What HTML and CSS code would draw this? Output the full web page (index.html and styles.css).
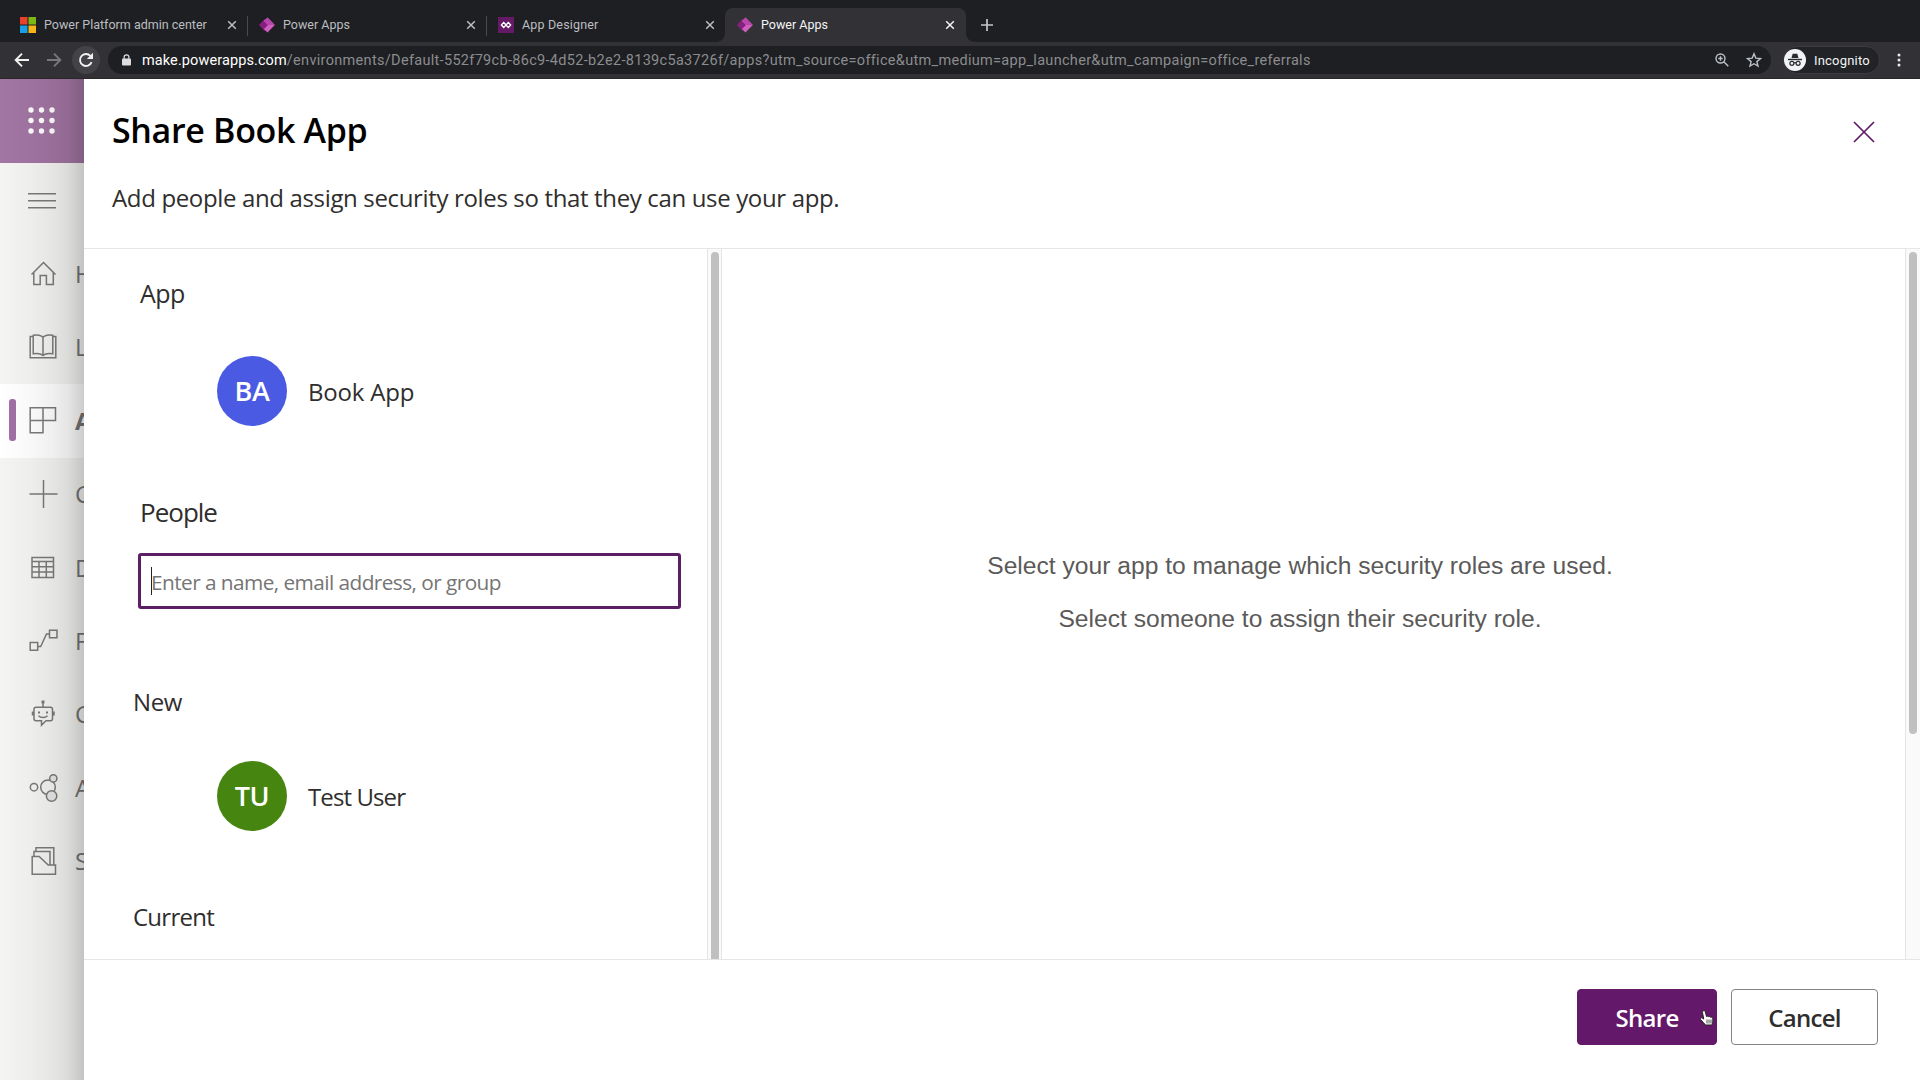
FILE: index.html
```html
<!DOCTYPE html>
<html lang="en">
<head>
<meta charset="utf-8">
<title>Power Apps</title>
<link rel="stylesheet" href="styles.css">
</head>
<body>
<svg class="defs" width="0" height="0">
  <defs>
    <symbol id="close" viewBox="0 0 10 10"><path d="M1.2 1.2l7.6 7.6M8.8 1.2L1.2 8.8" fill="none" stroke="currentColor" stroke-width="1.5"/></symbol>
    <symbol id="powerapps" viewBox="0 0 16 16"><path d="M5.500 2L0 8l5.500 6 5-6z" fill="#86207f"/><path d="M8.500 .6L5 4l4 4-4 4 3.500 3.400L15.800 8z" fill="#cf5fc0"/><path d="M8.500 .6L5 4l4 4h6.800z" fill="#b845ab"/></symbol>
  </defs>
</svg>
<div class="browser">
  <div class="tabs">
    <div class="tab">
      <svg class="fav" viewBox="0 0 16 16"><path fill="#e8412c" d="M0 0h7.500v7.500H0z"/><path fill="#7cb813" d="M8.500 0H16v7.500H8.500z"/><path fill="#1a9fe4" d="M0 8.500h7.500V16H0z"/><path fill="#f8b517" d="M8.500 8.500H16V16H8.500z"/></svg>
      <span class="tab-title">Power Platform admin center</span>
      <svg class="tab-close"><use href="#close"/></svg>
    </div>
    <div class="tab">
      <svg class="fav"><use href="#powerapps"/></svg>
      <span class="tab-title">Power Apps</span>
      <svg class="tab-close"><use href="#close"/></svg>
    </div>
    <div class="tab designer">
      <svg class="fav" viewBox="0 0 16 16"><path fill="#651a66" d="M0 0h16v16H0z"/><g fill="none" stroke="#fff" stroke-width="1.400"><path d="M5.700 5.500L8 8l-2.300 2.500L3.400 8zM10.300 5.500L12.600 8l-2.300 2.500L8 8z"/></g></svg>
      <span class="tab-title">App Designer</span>
      <svg class="tab-close"><use href="#close"/></svg>
    </div>
    <div class="tab active">
      <svg class="fav"><use href="#powerapps"/></svg>
      <span class="tab-title">Power Apps</span>
      <svg class="tab-close"><use href="#close"/></svg>
    </div>
    <svg class="new-tab" viewBox="0 0 12 12"><path d="M6 0v12M0 6h12" stroke="#c4c7ca" stroke-width="1.700"/></svg>
  </div>
  <div class="toolbar">
    <svg class="nav-btn" viewBox="0 0 16 16"><path d="M15 8H2M8 1.700L1.700 8 8 14.300" fill="none" stroke="#f1f1f1" stroke-width="1.900"/></svg>
    <svg class="nav-btn" viewBox="0 0 16 16"><path d="M1 8h13M8 1.700L14.300 8 8 14.300" fill="none" stroke="#77787b" stroke-width="1.900"/></svg>
    <span class="reload"><svg viewBox="0 0 16 16"><path d="M13.600 10.200A6 6 0 1 1 12.400 3.900L14 5.600" fill="none" stroke="#f1f1f1" stroke-width="1.900"/><path d="M15 .8v6.200H8.800z" fill="#f1f1f1"/></svg></span>
    <div class="omnibox">
      <svg class="lock" viewBox="0 0 9 12"><path d="M2.100 5V3.300a2.400 2.400 0 0 1 4.800 0V5" fill="none" stroke="#dcdddf" stroke-width="1.200"/><rect y="4.500" width="9" height="7" rx="1" fill="#dcdddf"/></svg>
      <div class="url"><span class="host">make.powerapps.com</span><span class="path">/environments/Default-552f79cb-86c9-4d52-b2e2-8139c5a3726f/apps?utm_source=office&amp;utm_medium=app_launcher&amp;utm_campaign=office_referrals</span></div>
      <svg class="mag" viewBox="0 0 14 14"><g fill="none" stroke="#bdc1c6" stroke-width="1.400"><circle cx="5.500" cy="5.500" r="4.500"/><path d="M8.800 8.800l4.500 4.500M5.500 3.300v4.400M3.300 5.500h4.400"/></g></svg>
      <svg class="star" viewBox="0 0 16 16"><path d="M8 1.800l1.800 4.300 4.700.4-3.600 3.100 1.100 4.500L8 11.700l-4 2.400 1.100-4.500L1.500 6.500l4.700-.4z" fill="none" stroke="#bdc1c6" stroke-width="1.400"/></svg>
    </div>
    <div class="incognito">
      <svg viewBox="0 0 22 22"><circle cx="11" cy="11" r="11" fill="#f1f3f4"/><path d="M7.500 9L8.700 4.800h4.600L14.500 9z" fill="#2a2b2e"/><path d="M4 10.500h14" stroke="#2a2b2e" stroke-width="1.400"/><g fill="none" stroke="#2a2b2e" stroke-width="1.200"><circle cx="7.900" cy="14.300" r="2"/><circle cx="14.100" cy="14.300" r="2"/><path d="M9.900 14c.7-.5 1.500-.5 2.200 0"/></g></svg>
      <span>Incognito</span>
    </div>
    <svg class="kebab" viewBox="0 0 4 14"><g fill="#e8eaed"><circle cx="2" cy="2" r="1.500"/><circle cx="2" cy="7" r="1.500"/><circle cx="2" cy="12" r="1.500"/></g></svg>
  </div>
</div>
<div class="page">
  <aside class="sidebar">
    <div class="waffle"><svg viewBox="0 0 27 27"><g fill="#fff"><circle cx="3" cy="3" r="2.700"/><circle cx="13.500" cy="3" r="2.700"/><circle cx="24" cy="3" r="2.700"/><circle cx="3" cy="13.500" r="2.700"/><circle cx="13.500" cy="13.500" r="2.700"/><circle cx="24" cy="13.500" r="2.700"/><circle cx="3" cy="24" r="2.700"/><circle cx="13.500" cy="24" r="2.700"/><circle cx="24" cy="24" r="2.700"/></g></svg></div>
    <nav>
      <div class="item"><svg viewBox="0 0 28 28"><path d="M-1 6.800h28M-1 13.800h28M-1 20.800h28"/></svg></div>
      <div class="item"><svg viewBox="0 0 28 28"><path d="M2.500 14.500L14.500 2.500l12 12M4.800 12.500V24.500h6.400v-9h6.200v9h6.900V12.500"/></svg><span>H</span></div>
      <div class="item"><svg viewBox="0 0 28 28"><path d="M4 3.500H1.200v21.300h25.600V3.500H24M14 4.200C12.500 2.200 8 1.400 4.200 2.300v18.500c4-.8 8 0 9.800 1.700 1.800-1.700 5.800-2.500 9.800-1.700V2.300C20 1.400 15.500 2.200 14 4.200zv18"/></svg><span>L</span></div>
      <div class="item selected"><svg viewBox="0 0 28 28"><path d="M1.200 .8h25.300v12.600H1.200zM14 .8v24.900H1.200V.8"/></svg><span>A</span></div>
      <div class="item"><svg viewBox="0 0 28 28"><path d="M14.500 0v28M.5 14h28"/></svg><span>C</span></div>
      <div class="item"><svg viewBox="0 0 28 28"><path d="M3 3.500h21.500v20H3zM3 7.500h21.500M3 12.700h21.500M3 18.100h21.500M10 7.500v16M17.300 7.500v16"/></svg><span>D</span></div>
      <div class="item"><svg viewBox="0 0 28 28"><path d="M1.200 15.500h7.500v7.700H1.200zM20.500 3.200H28v7.500h-7.500zM8.700 19.500h3L17.500 7h3"/></svg><span>F</span></div>
      <div class="item"><svg viewBox="0 0 28 28"><path d="M7 7.200h14.500a2 2 0 0 1 2 2v9.500a2 2 0 0 1-2 2H17l-4.500 4.500v-4.500H7a2 2 0 0 1-2-2V9.200a2 2 0 0 1 2-2zM14 7V2M3.500 11.500v4M25 11.500v4M9.500 15.700c2.500 2.500 6.500 2.500 9 0"/><path class="solid" d="M12.500 .5h3v3h-3zM9 11.500h2v2H9zM17 11.500h2v2h-2z"/></svg><span>C</span></div>
      <div class="item"><svg viewBox="0 0 28 28"><circle cx="5" cy="13.200" r="3.700"/><circle cx="19" cy="13.200" r="7.300"/><circle class="fill" cx="24.300" cy="4.400" r="3.600"/><circle class="fill" cx="22.600" cy="22" r="5.200"/></svg><span>A</span></div>
      <div class="item"><svg viewBox="0 0 28 28"><path d="M3.200 9.500h7l9 8.500h7.300v9.200H3.200zM5 9.500V4.500h16V18M7 4.500V.8h17.800V18"/></svg><span>S</span></div>
    </nav>
    <div class="shade"></div>
  </aside>
  <main class="panel">
    <header>
      <div class="titles">
        <h1>Share Book App</h1>
        <p>Add people and assign security roles so that they can use your app.</p>
      </div>
      <svg class="dismiss" viewBox="0 0 22 22"><path d="M1 1l20 20M21 1L1 21" stroke="#5f1c66" stroke-width="1.700"/></svg>
    </header>
    <div class="body">
      <section class="left">
        <h2 class="h-app">App</h2>
        <div class="persona"><span class="avatar blue">BA</span><span class="name">Book App</span></div>
        <h2 class="h-people">People</h2>
        <div class="input"><i class="caret"></i><span class="placeholder">Enter a name, email address, or group</span></div>
        <h3 class="h-new">New</h3>
        <div class="persona"><span class="avatar green">TU</span><span class="name user">Test User</span></div>
        <h3 class="h-current">Current</h3>
      </section>
      <div class="scroll inner"><i></i></div>
      <section class="right">
        <p>Select your app to manage which security roles are used.</p>
        <p>Select someone to assign their security role.</p>
      </section>
      <div class="scroll outer"><i></i></div>
    </div>
    <footer>
      <div class="btn primary"><span>Share</span>
        <svg class="cursor" viewBox="0 0 16 18"><path d="M4.200 1c1-.6 1.900 0 2.200 1l1.100 4.500c.8-.6 1.700-.4 2 .3.800-.5 1.700-.2 2 .5.900-.4 2 0 2.200 1 .3 2.200.2 4.500-.8 6.700H6.500C5.200 13 3 11.500 1.500 9.300c-.6-1.200.6-2 1.700-1.300l1.500 1.100L3.500 2.500C3.300 1.800 3.600 1.300 4.200 1z" fill="#fff" stroke="#222" stroke-width="1"/><path d="M8 9.500v4M10 9.500v4M12 9.500v4" stroke="#222" stroke-width=".8"/></svg>
      </div>
      <div class="btn"><span>Cancel</span></div>
    </footer>
  </main>
</div>
</body>
</html>
```
FILE: styles.css
```css
* { box-sizing: border-box; }
body { margin: 0; width: 1920px; height: 1080px; overflow: hidden; background: #fff; font-family: "Open Sans", "Noto Sans", sans-serif; color: #2f2e2d; white-space: nowrap; }
h1, h2, h3, p { margin: 0; font-weight: 400; }
svg { display: block; flex: none; }
.defs { display: none; }

/* Browser chrome */
.browser { height: 79px; font-family: Roboto, sans-serif; }
.tabs { height: 42px; background: #1e1f22; display: flex; padding: 8px 0 0 8px; }
.tab { width: 239px; height: 34px; padding: 0 10px 0 12px; display: flex; align-items: center; color: #bcbec1; font-size: 12.5px; position: relative; }
.tab:nth-child(-n+2)::after { content: ""; position: absolute; right: -1px; top: 8px; width: 1px; height: 20px; background: #4a4b4f; }
.tab.active { width: 241px; padding-right: 11px; background: #323236; border-radius: 8px 8px 0 0; color: #f4f5f6; }
.tab.active::before, .tab.active::after { content: ""; position: absolute; bottom: 0; width: 8px; height: 8px; }
.tab.active::before { left: -8px; background: radial-gradient(circle at 0 0, #1e1f22 7.5px, #323236 8px); }
.tab.active::after { right: -8px; background: radial-gradient(circle at 100% 0, #1e1f22 7.5px, #323236 8px); }
.fav { width: 16px; height: 16px; margin-right: 8px; }
.tab-title { flex: 1; padding-bottom: 1px; }
.designer .tab-title { letter-spacing: .17px; }
.tab-close { width: 10px; height: 10px; }
.new-tab { width: 12px; height: 12px; margin: 11px 0 0 15px; }
.toolbar { height: 37px; background: #323236; border-bottom: 1px solid #28282b; display: flex; align-items: center; padding: 0 19px 0 14px; }
.nav-btn { width: 16px; height: 16px; margin-right: 16px; }
.reload { width: 28px; height: 28px; border-radius: 50%; background: #434347; display: grid; place-items: center; margin: 0 8px 0 -6px; }
.reload svg { width: 16px; height: 16px; }
.omnibox { flex: 1; height: 28px; border-radius: 14px; background: #1e1f22; display: flex; align-items: center; padding: 0 9px 0 14px; font-size: 14.5px; color: #8b8c8f; margin-right: 12px; }
.lock { width: 9px; height: 12px; margin-right: 11px; }
.url { flex: 1; }
.host { color: #fff; letter-spacing: .1px; }
.path { letter-spacing: .31px; }
.mag { width: 14px; height: 14px; margin-right: 17px; }
.star { width: 16px; height: 16px; }
.incognito { width: 97px; height: 28px; border-radius: 14px; background: #222326; border: 1px solid #3c3c40; display: flex; align-items: center; gap: 8px; color: #f1f3f4; font-size: 13px; letter-spacing: .2px; margin-right: 17px; }
.incognito svg { width: 22px; height: 22px; }
.kebab { width: 4px; height: 14px; }

/* Sidebar behind the panel */
.page { display: flex; height: 1001px; }
.sidebar { width: 84px; overflow: hidden; background: #f4f4f2; position: relative; }
.waffle { height: 84px; background: #a275a3; padding: 28px 0 0 28px; }
.waffle svg { width: 27px; height: 27px; }
nav { padding-top: 1px; }
.item { height: 73.4px; padding-left: 29px; display: flex; align-items: center; gap: 18px; color: #757575; font-size: 24px; line-height: 40px; }
.item svg { width: 28px; height: 28px; overflow: visible; fill: none; stroke: #7a7a7a; stroke-width: 1.5; }
.item .solid { fill: #7a7a7a; stroke: none; }
.item .fill { fill: #e6e6e6; }
.selected { background: #fff; font-weight: 700; position: relative; }
.selected::before { content: ""; position: absolute; left: 9px; top: 15px; width: 7px; height: 42px; border-radius: 3px; background: #a06fa3; }
.shade { position: absolute; inset: 0; background: linear-gradient(90deg, rgba(0,0,0,0) 0, rgba(0,0,0,.025) 28px, rgba(0,0,0,.06) 52px, rgba(0,0,0,.1) 68px, rgba(0,0,0,.2) 84px); }

/* Share panel */
.panel { flex: 1; display: flex; flex-direction: column; background: #fff; }
header { height: 170px; border-bottom: 1px solid #e6e6e6; padding: 26px 45px 0 28px; display: flex; justify-content: space-between; }
h1 { font-size: 34px; line-height: 50px; font-weight: 600; color: #000; letter-spacing: -.34px; }
header p { font-size: 24px; line-height: 40px; margin-top: 23px; letter-spacing: -.35px; }
.dismiss { width: 22px; height: 22px; margin-top: 16px; }
.body { height: 710px; display: flex; }
.left { width: 623px; padding-top: 24px; }
.left h2, .left h3 { line-height: 40px; }
.left h2 { font-size: 25px; padding-left: 56px; letter-spacing: -.6px; }
.left h3 { font-size: 24px; padding-left: 49px; letter-spacing: -.4px; }
.persona { display: flex; align-items: center; padding-left: 133px; gap: 21px; font-size: 24px; line-height: 40px; }
.name { padding-top: 2px; letter-spacing: -.2px; }
.name.user { letter-spacing: -.9px; }
.avatar { width: 70px; height: 70px; border-radius: 50%; display: grid; place-items: center; color: #fff; font-weight: 600; font-size: 27px; letter-spacing: -.3px; }
.blue { background: #4a5ae2; }
.green { background: #468510; }
.h-app { margin-bottom: 43px; }
.left .h-people { margin: 66px 0 21px; font-size: 26px; letter-spacing: -1px; }
.input { width: 543px; height: 56px; margin-left: 54px; border: 3px solid #5c1f66; border-radius: 3px; display: flex; align-items: center; padding-left: 10px; font-size: 20.8px; color: #757575; line-height: 40px; }
.placeholder { padding-top: 2px; letter-spacing: -.56px; }
.caret { width: 1px; height: 28px; background: #222; margin-right: -1px; }
.h-new { margin: 73px 0 39px; }
.left .h-current { margin-top: 66px; letter-spacing: -.75px; }
.scroll { background: #fafafa; border-left: 1px solid #e4e4e4; padding: 3px 3px 0; }
.scroll i { display: block; border-radius: 4px; background: #c0c0c0; }
.inner { width: 15px; padding-right: 2px; border-right: 1px solid #e4e4e4; }
.inner i { width: 8px; height: 707px; border-radius: 4px 4px 0 0; }
.outer { width: 15px; }
.outer i { width: 8px; height: 482px; }
.right { flex: 1; padding: 297px 27px 0 0; text-align: center; font-family: "Liberation Sans", sans-serif; font-size: 24.64px; line-height: 40px; color: #5b5a59; }
.right p + p { margin-top: 13px; }
footer { height: 121px; border-top: 1px solid #e6e6e6; padding: 29px 42px 0 0; display: flex; justify-content: flex-end; gap: 14px; }
.btn { width: 147px; height: 56px; border: 1px solid #86837f; border-radius: 4px; display: grid; place-items: center; font-size: 24px; font-weight: 600; letter-spacing: -.7px; position: relative; }
.primary { width: 140px; background: #64186a; border-color: #64186a; color: #fff; }
.cursor { position: absolute; width: 16px; height: 18px; left: 121px; top: 20px; }
```
